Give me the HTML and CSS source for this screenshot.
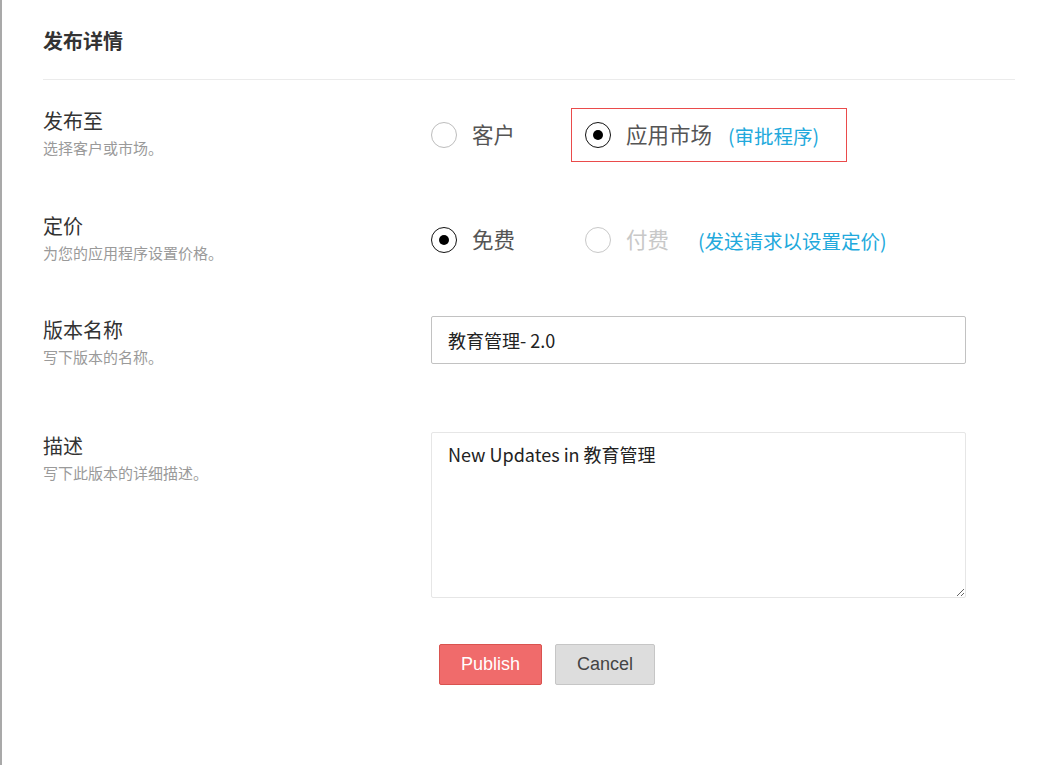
FILE: index.html
```
<!DOCTYPE html>
<html lang="zh-CN">
<head>
    <meta charset="UTF-8">
    <meta name="viewport" content="width=device-width, initial-scale=1.0">
    <title>发布详情</title>
    <link rel="stylesheet" href="styles.css">
</head>
<body>
    <div class="page">
        <div class="header">
            <h1 class="title">发布详情</h1>
        </div>
        <form class="form">
            <div class="row row-publish">
                <div class="label">
                    <div class="name">发布至</div>
                    <div class="desc">选择客户或市场。</div>
                </div>
                <div class="options">
                    <label class="opt">
                        <span class="radio"></span>
                        <span class="opt-text">客户</span>
                    </label>
                    <label class="opt selected">
                        <span class="radio checked"></span>
                        <span class="opt-text">应用市场</span>
                        <a href="#" class="hint">(审批程序)</a>
                    </label>
                </div>
            </div>
            <div class="row row-price">
                <div class="label">
                    <div class="name">定价</div>
                    <div class="desc">为您的应用程序设置价格。</div>
                </div>
                <div class="options">
                    <label class="opt">
                        <span class="radio checked"></span>
                        <span class="opt-text">免费</span>
                    </label>
                    <label class="opt disabled">
                        <span class="radio"></span>
                        <span class="opt-text">付费</span>
                        <a href="#" class="hint">(发送请求以设置定价)</a>
                    </label>
                </div>
            </div>
            <div class="row row-version">
                <div class="label">
                    <div class="name">版本名称</div>
                    <div class="desc">写下版本的名称。</div>
                </div>
                <div class="control">
                    <input type="text" class="input" value="教育管理- 2.0">
                </div>
            </div>
            <div class="row row-desc">
                <div class="label">
                    <div class="name">描述</div>
                    <div class="desc">写下此版本的详细描述。</div>
                </div>
                <div class="control">
                    <textarea class="textarea">New Updates in 教育管理</textarea>
                </div>
            </div>
            <div class="actions">
                <button type="button" class="btn btn-publish">Publish</button>
                <button type="button" class="btn btn-cancel">Cancel</button>
            </div>
        </form>
    </div>
</body>
</html>
```
FILE: styles.css
```
body {
    margin: 0;
    background: #fff;
    font-family: "Noto Sans CJK SC", "Noto Sans", sans-serif;
    color: #333;
}
.page {
    min-height: 100vh;
    box-sizing: border-box;
    border-left: 2px solid #a9a9a9;
    padding: 0 35px 0 41px;
}
.header {
    padding: 27px 0 24px;
    border-bottom: 1px solid #ebebeb;
}
.title {
    margin: 0;
    font-size: 20px;
    line-height: 28px;
    font-weight: bold;
    color: #333;
}
.form {
    padding-top: 28px;
}
.row {
    display: grid;
    grid-template-columns: 388px 535px;
    align-items: start;
}
.row-publish {
    height: 105px;
}
.row-price {
    height: 104px;
}
.row-version {
    height: 116px;
}
.row-desc {
    height: 211px;
}
.name {
    font-size: 20px;
    line-height: 26px;
    color: #333;
}
.desc {
    margin-top: 4px;
    font-size: 15px;
    line-height: 20px;
    color: #9a9a9a;
}
.options {
    display: flex;
    gap: 42px;
    margin-left: -15px;
}
.opt {
    display: flex;
    align-items: center;
    height: 54px;
    box-sizing: border-box;
    padding: 0 27px 0 13px;
    border: 1px solid transparent;
    cursor: pointer;
}
.opt:first-child {
    width: 113px;
    padding: 0 0 0 14px;
}
.opt.selected {
    border-color: #ea4b4b;
}
.radio {
    width: 26px;
    height: 26px;
    box-sizing: border-box;
    border: 1px solid #bdbdbd;
    border-radius: 50%;
    display: flex;
    align-items: center;
    justify-content: center;
    flex-shrink: 0;
}
.radio.checked {
    border-color: #111;
}
.radio.checked::after {
    content: "";
    width: 10px;
    height: 10px;
    border-radius: 50%;
    background: #000;
}
.opt-text {
    margin-left: 15px;
    font-size: 21.5px;
    line-height: 30px;
    margin-top: -3px;
    color: #555;
    white-space: nowrap;
}
.opt.disabled .radio {
    border-color: #c8c8c8;
}
.opt.disabled .opt-text {
    color: #c8c8c8;
}
.hint {
    margin-left: 16px;
    font-size: 19.5px;
    color: #22a9dc;
    text-decoration: none;
    white-space: nowrap;
}
.opt.disabled .hint {
    margin-left: 29px;
}
.control {
    margin-top: -1px;
}
.input {
    display: block;
    width: 535px;
    height: 48px;
    box-sizing: border-box;
    padding: 0 16px;
    border: 1px solid #c2c2c2;
    border-radius: 2px;
    font-family: "Noto Sans CJK SC", "Noto Sans", sans-serif;
    font-size: 18px;
    color: #222;
    outline: none;
}
.textarea {
    display: block;
    width: 535px;
    height: 166px;
    box-sizing: border-box;
    padding: 8px 16px;
    border: 1px solid #e6e6e6;
    border-radius: 2px;
    font-family: "Noto Sans CJK SC", "Noto Sans", sans-serif;
    font-size: 18px;
    line-height: 26px;
    color: #222;
    outline: none;
}
.actions {
    display: flex;
    gap: 13px;
    padding-left: 396px;
}
.btn {
    height: 41px;
    padding: 0 21px;
    border-radius: 2px;
    font-family: "Liberation Sans", Arial, sans-serif;
    font-size: 18px;
    cursor: pointer;
}
.btn-publish {
    background: #f06b6b;
    border: 1px solid #d9534f;
    color: #fff;
}
.btn-cancel {
    background: #dddddd;
    border: 1px solid #c6c6c6;
    color: #444;
}
```
